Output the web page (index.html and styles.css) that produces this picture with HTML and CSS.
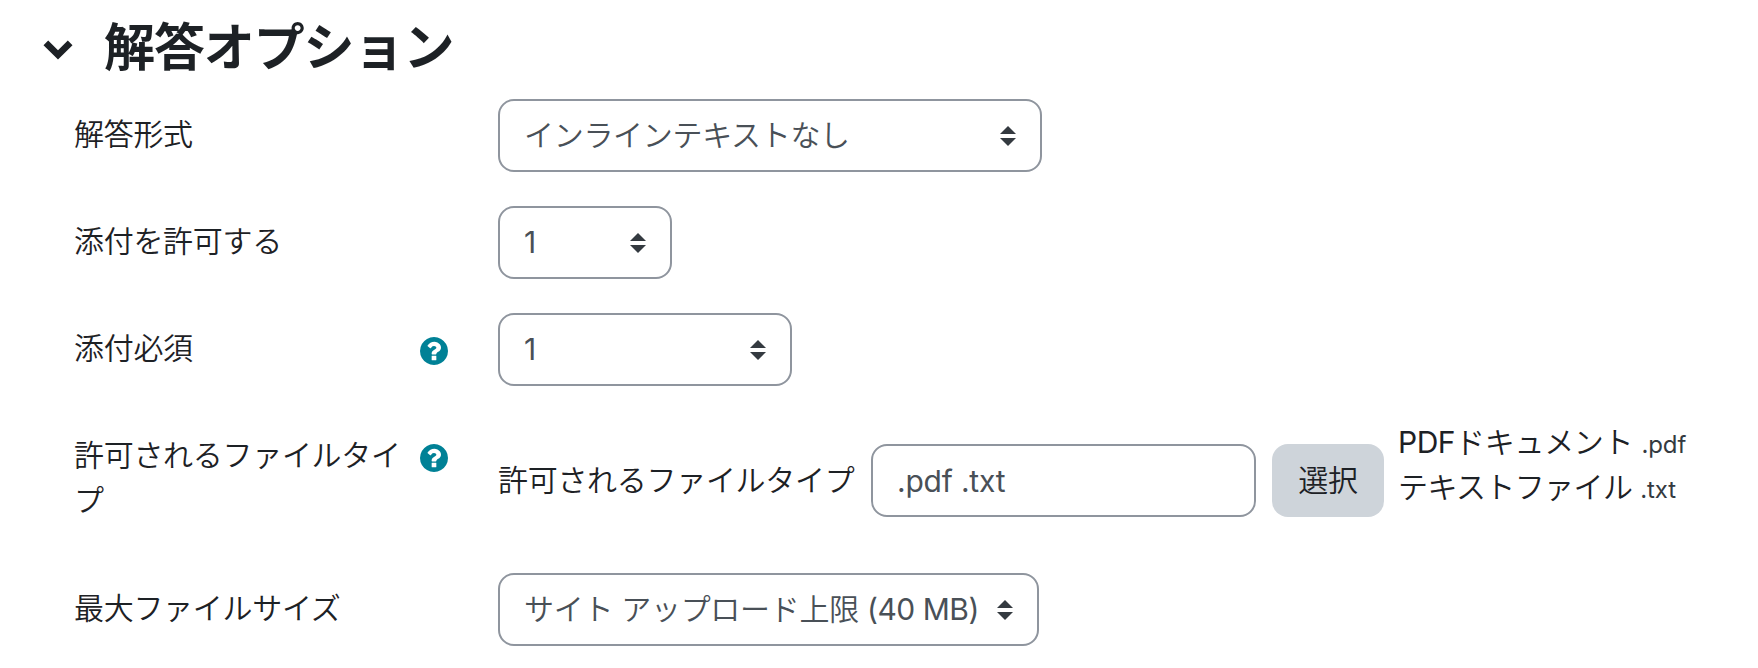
FILE: index.html
```html
<!DOCTYPE html>
<html lang="ja">
<head>
<meta charset="utf-8">
<title>解答オプション</title>
<link rel="stylesheet" href="styles.css">
</head>
<body>
<svg class="defs" width="0" height="0" aria-hidden="true">
  <symbol id="help" viewBox="0 128 1536 1536"><path d="M896 1376v-192q0-14-9-23t-23-9h-192q-14 0-23 9t-9 23v192q0 14 9 23t23 9h192q14 0 23-9t9-23zm256-672q0-88-55.5-163t-138.5-116-170-41q-243 0-371 213-15 24 8 42l132 100q7 6 19 6 16 0 25-12 53-68 86-92 34-24 86-24 48 0 85.500 26t37.500 59q0 38-20 61t-68 45q-63 28-115.500 86.500t-52.500 125.500v36q0 14 9 23t23 9h192q14 0 23-9t9-23q0-19 21.500-49.500t54.500-49.500q32-18 49-28.500t46-35 44.500-48 28-60.500 12.500-81zm384 192q0 209-103 385.500t-279.500 279.500-385.500 103-385.500-103-279.500-279.500-103-385.500 103-385.500 279.500-279.500 385.500-103 385.500 103 279.500 279.500 103 385.500z"/></symbol>
  <symbol id="sort" viewBox="0 0 16 20"><path d="M0 8 8 0l8 8zM0 12h16l-8 8z"/></symbol>
</svg>
<main class="section">
  <header class="section-head">
    <svg class="chevron" viewBox="0 0 30 20"><path d="M.5 5.200 5.200.5 15 10.300 24.800.5l4.700 4.700L15 19.500z"/></svg>
    <h3 class="title">解答オプション</h3>
  </header>
  <div class="row">
    <div class="label"><span class="label-text">解答形式</span></div>
    <div class="control select w-format"><span>インラインテキストなし</span><svg class="sort"><use href="#sort"/></svg></div>
  </div>
  <div class="row">
    <div class="label"><span class="label-text">添付を許可する</span></div>
    <div class="control select w-allow"><span class="latin">1</span><svg class="sort"><use href="#sort"/></svg></div>
  </div>
  <div class="row">
    <div class="label"><span class="label-text">添付必須</span><svg class="help"><use href="#help"/></svg></div>
    <div class="control select w-required"><span class="latin">1</span><svg class="sort"><use href="#sort"/></svg></div>
  </div>
  <div class="row row-types">
    <div class="label"><span class="label-text">許可されるファイルタイプ</span><svg class="help"><use href="#help"/></svg></div>
    <div class="types">
      <span class="types-label">許可されるファイルタイプ</span>
      <div class="control input">.pdf .txt</div>
      <div class="button">選択</div>
      <ul class="descriptions">
        <li><span class="latin">PDF</span>ドキュメント <small>.pdf</small></li>
        <li>テキストファイル <small>.txt</small></li>
      </ul>
    </div>
  </div>
  <div class="row">
    <div class="label"><span class="label-text">最大ファイルサイズ</span></div>
    <div class="control select w-size"><span>サイト アップロード上限 <span class="latin">(40 MB)</span></span><svg class="sort"><use href="#sort"/></svg></div>
  </div>
</main>
</body>
</html>
```
FILE: styles.css
```css
* { box-sizing: border-box; }
body {
  margin: 0;
  background: #fff;
  color: #1d2125;
  font: 350 30px/45px Inter, "Noto Sans CJK JP", sans-serif;
  letter-spacing: -.3px;
}
.latin { font-weight: 400; letter-spacing: -.5px; }
.defs { display: block; height: 0; }
.section { width: 1758px; height: 668px; overflow: hidden; }
.section-head {
  display: flex;
  align-items: center;
  height: 99px;
  padding: 0 0 3px 43px;
}
.chevron { width: 30px; height: 20px; margin-top: 3px; fill: #1d2125; }
.title {
  margin: 0 0 0 31px;
  font-size: 51px;
  font-weight: 700;
  line-height: 60px;
  letter-spacing: -1.1px;
}
.row {
  display: flex;
  align-items: flex-start;
  height: 107px;
  padding-left: 74px;
}
.label {
  display: flex;
  justify-content: space-between;
  width: 424px;
  padding: 13px 50px 0 0;
}
.label-text { max-width: 328px; }
.help { flex: none; width: 28px; height: 28px; margin-top: 10.5px; fill: #008196; }
.control {
  height: 73px;
  border: 2px solid #8f959e;
  border-radius: 16px;
  padding: 0 24px;
  color: #495057;
  line-height: 69px;
  white-space: nowrap;
}
.select { display: flex; align-items: center; justify-content: space-between; }
.sort { flex: none; width: 16px; height: 20px; fill: #343a40; }
.w-format { width: 544px; }
.w-allow { width: 174px; }
.w-required { width: 294px; }
.w-size { width: 541px; }
.row-types { height: 153px; }
.types { display: flex; align-items: center; height: 120px; white-space: nowrap; }
.types-label { width: 373px; }
.input { width: 385px; line-height: 71px; font-weight: 400; letter-spacing: -.2px; }
.button {
  width: 112px;
  height: 73px;
  margin-left: 16px;
  border-radius: 16px;
  background: #ced4da;
  line-height: 72px;
  text-align: center;
}
.descriptions { align-self: flex-start; margin: 0 0 0 14px; padding: 0; list-style: none; }
.descriptions li { height: 45px; }
.descriptions li + li { letter-spacing: -.6px; }
small { color: #343a40; font-size: 24px; font-weight: 400; line-height: 1; letter-spacing: -.1px; }
```
